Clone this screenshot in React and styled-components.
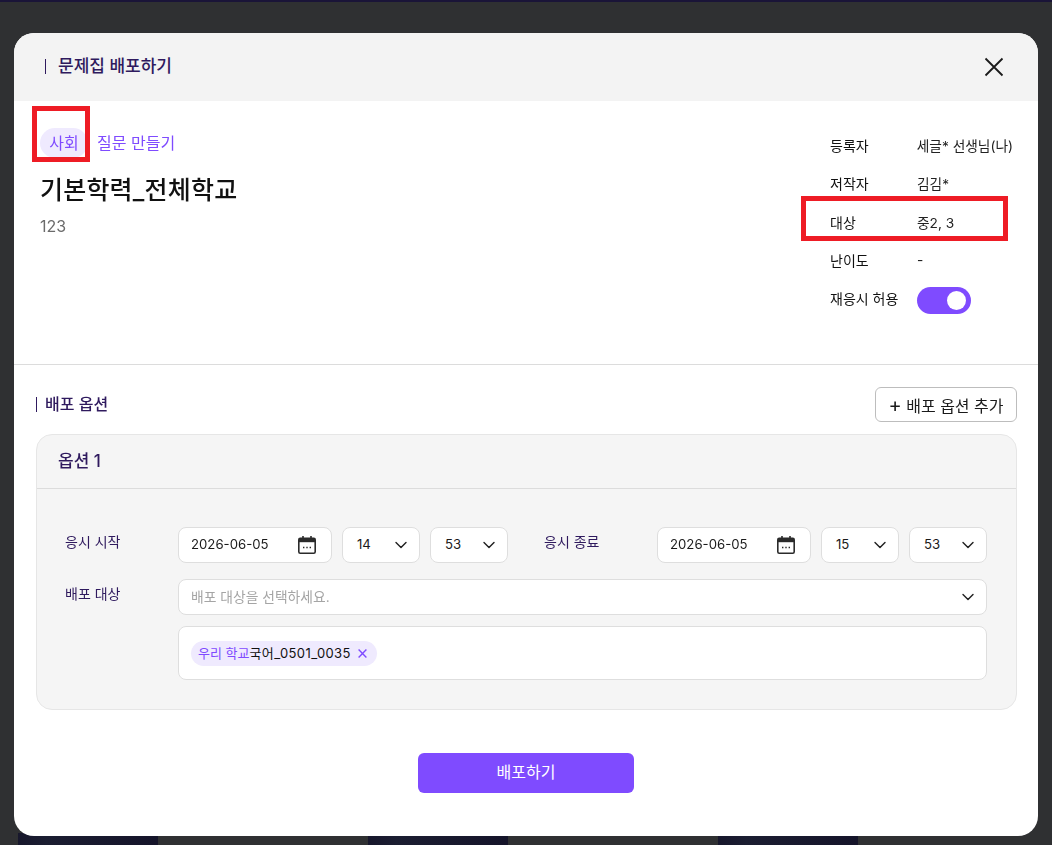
import React from "react";
import styled, { createGlobalStyle } from "styled-components";
import { ChevronDown } from "lucide-react";

const FONT = `Inter, "Noto Sans CJK KR", "Noto Sans", sans-serif`;
const PURPLE = "#7f4bff";
const NAVY = "#2f1a5e";

const GlobalStyle = createGlobalStyle`
  html, body {
    margin: 0;
    height: 100%;
    background: #2f3032;
    font-family: ${FONT};
    overflow: hidden;
  }
  * { box-sizing: border-box; }
`;

const META = [
  ["등록자", "세글* 선생님(나)"],
  ["저작자", "김김*"],
  ["대상", "중2, 3"],
  ["난이도", "-"],
];

const CalendarIcon = () => (
  <svg width="18" height="18" viewBox="0 0 18 18" fill="none">
    <path d="M5 0v3M13 0v3" stroke="#2b2b2b" strokeWidth="1.6" />
    <rect x="0.8" y="2.4" width="16.4" height="14.8" rx="1.4" stroke="#2b2b2b" strokeWidth="1.6" />
    <rect x="1" y="2.6" width="16" height="3.6" fill="#2b2b2b" />
    <path d="M5 11.5h1.4M8.3 11.5h1.4M11.6 11.5H13" stroke="#2b2b2b" strokeWidth="1.4" />
  </svg>
);

const CloseIcon = () => (
  <svg width="20" height="20" viewBox="0 0 20 20" fill="none">
    <path d="M1.5 1.5l17 17M18.5 1.5l-17 17" stroke="#1a1a1a" strokeWidth="1.8" />
  </svg>
);

const RemoveIcon = () => (
  <svg width="9" height="9" viewBox="0 0 9 9" fill="none">
    <path d="M0.6 0.6l7.8 7.8M8.4 0.6l-7.8 7.8" stroke={PURPLE} strokeWidth="1.4" />
  </svg>
);

const DateField = ({ value }) => (
  <DateBox>
    <FieldText>{value}</FieldText>
    <CalendarIcon />
  </DateBox>
);

const TimeField = ({ value }) => (
  <TimeBox>
    <FieldText>{value}</FieldText>
    <ChevronDown size={20} strokeWidth={1.7} color="#222" />
  </TimeBox>
);

const App = () => {
  return (
    <>
      <GlobalStyle />
      <Backdrop>
        <PeekCard />
        <PeekCard />
        <PeekCard />
      </Backdrop>
      <Overlay>
        <Modal>
          <ModalHeader>
            <HeaderTitle>문제집 배포하기</HeaderTitle>
            <CloseButton>
              <CloseIcon />
            </CloseButton>
          </ModalHeader>

          <Summary>
            <SummaryMain>
              <TagRow>
                <SubjectChip>사회</SubjectChip>
                <MakeLink>질문 만들기</MakeLink>
                <Marker $top={-22} $left={-8} $width={58} $height={56} />
              </TagRow>
              <BookTitle>기본학력_전체학교</BookTitle>
              <BookDesc>123</BookDesc>
            </SummaryMain>
            <MetaList>
              {META.map(([label, value]) => (
                <MetaRow key={label}>
                  <MetaLabel>{label}</MetaLabel>
                  <MetaValue>{value}</MetaValue>
                  {label === "대상" && <Marker $top={-8} $left={-29} $width={207} $height={45} />}
                </MetaRow>
              ))}
              <MetaRow>
                <MetaLabel>재응시 허용</MetaLabel>
                <Toggle />
              </MetaRow>
            </MetaList>
          </Summary>

          <OptionSection>
            <SectionHead>
              <SectionTitle>배포 옵션</SectionTitle>
              <AddButton>
                <Plus>+</Plus> 배포 옵션 추가
              </AddButton>
            </SectionHead>

            <OptionCard>
              <OptionHead>옵션 1</OptionHead>
              <OptionBody>
                <Row>
                  <FieldLabel>응시 시작</FieldLabel>
                  <DateField value="2026-06-05" />
                  <TimeField value="14" />
                  <TimeField value="53" />
                  <FieldLabel $indent={26}>응시 종료</FieldLabel>
                  <DateField value="2026-06-05" />
                  <TimeField value="15" />
                  <TimeField value="53" />
                </Row>
                <Row>
                  <FieldLabel>배포 대상</FieldLabel>
                  <TargetCol>
                    <TargetSelect>
                      <Placeholder>배포 대상을 선택하세요.</Placeholder>
                      <ChevronDown size={20} strokeWidth={1.7} color="#222" />
                    </TargetSelect>
                    <TargetBox>
                      <TargetChip>
                        <ChipScope>우리 학교</ChipScope>
                        <ChipName>국어_0501_0035</ChipName>
                        <RemoveIcon />
                      </TargetChip>
                    </TargetBox>
                  </TargetCol>
                </Row>
              </OptionBody>
            </OptionCard>
          </OptionSection>

          <Footer>
            <SubmitButton>배포하기</SubmitButton>
          </Footer>
        </Modal>
      </Overlay>
    </>
  );
};

const Backdrop = styled.div`
  position: fixed;
  inset: 0;
  display: flex;
  align-items: flex-end;
  gap: 210px;
  padding-left: 18px;
  border-top: 2px solid #1a1438;
`;
const PeekCard = styled.div`
  width: 140px;
  height: 12px;
  background: linear-gradient(90deg, #17172c, #1b1d31 20%, #15142a);
`;
const Overlay = styled.div`
  position: fixed;
  inset: 0;
  padding: 33px 14px 9px;
`;
const Modal = styled.div`
  height: 803px;
  background: #fff;
  border-radius: 20px;
  overflow: hidden;
  display: flex;
  flex-direction: column;
`;
const ModalHeader = styled.header`
  height: 68px;
  flex: none;
  background: #f3f3f3;
  display: flex;
  align-items: center;
  justify-content: space-between;
  padding: 0 34px 0 31px;
`;
const HeaderTitle = styled.h2`
  margin: 0 0 1px;
  border-left: 1px solid ${NAVY};
  padding-left: 12px;
  font-size: 17px;
  line-height: 15px;
  font-weight: 500;
  color: ${NAVY};
`;
const CloseButton = styled.button`
  width: 20px;
  height: 20px;
  padding: 0;
  border: none;
  background: none;
  display: flex;
`;
const Summary = styled.section`
  height: 264px;
  flex: none;
  display: flex;
  justify-content: space-between;
  border-bottom: 1px solid #dcdcdc;
  padding: 27px 25px 0 26px;
`;
const SummaryMain = styled.div`
  display: flex;
  flex-direction: column;
`;
const TagRow = styled.div`
  position: relative;
  display: flex;
  align-items: center;
  gap: 9px;
`;
const Marker = styled.div`
  position: absolute;
  top: ${(p) => p.$top}px;
  left: ${(p) => p.$left}px;
  width: ${(p) => p.$width}px;
  height: ${(p) => p.$height}px;
  border: 5px solid #ee1c25;
  pointer-events: none;
`;
const SubjectChip = styled.span`
  height: 30px;
  width: 48px;
  padding-bottom: 2px;
  border-radius: 15px;
  background: #efeafe;
  color: ${PURPLE};
  font-size: 16px;
  display: flex;
  align-items: center;
  justify-content: center;
`;
const MakeLink = styled.a`
  margin-bottom: 2px;
  color: ${PURPLE};
  font-size: 16px;
`;
const BookTitle = styled.h1`
  margin: 14px 0 0;
  font-size: 25px;
  line-height: 36px;
  font-weight: 500;
  letter-spacing: 0.2px;
  color: #111;
`;
const BookDesc = styled.p`
  margin: 7px 0 0;
  font-size: 16px;
  line-height: 22px;
  color: #6b6b6b;
`;
const MetaList = styled.dl`
  margin: -1px 0 0;
  width: 183px;
  display: flex;
  flex-direction: column;
`;
const MetaRow = styled.div`
  position: relative;
  height: 38.25px;
  display: flex;
  align-items: center;
`;
const MetaLabel = styled.dt`
  width: 87px;
  margin-bottom: 2px;
  font-size: 14px;
  color: #111;
`;
const MetaValue = styled.dd`
  margin: 0 0 2px;
  font-size: 13.7px;
  color: #222;
  white-space: nowrap;
`;
const Toggle = styled.div`
  position: relative;
  width: 54px;
  height: 27px;
  margin-top: 2px;
  border-radius: 14px;
  background: ${PURPLE};

  &::after {
    content: "";
    position: absolute;
    top: 4px;
    right: 5px;
    width: 19px;
    height: 19px;
    border-radius: 50%;
    background: #fff;
  }
`;
const OptionSection = styled.section`
  padding: 22px 21px 0 22px;
`;
const SectionHead = styled.div`
  display: flex;
  align-items: center;
  justify-content: space-between;
  height: 35px;
`;
const SectionTitle = styled.h3`
  margin: 0;
  border-left: 1px solid ${NAVY};
  padding-left: 8px;
  font-size: 16px;
  line-height: 15px;
  font-weight: 500;
  color: ${NAVY};
`;
const AddButton = styled.button`
  width: 142px;
  height: 35px;
  border: 1px solid #bdbdbd;
  border-radius: 6px;
  background: #fff;
  font-family: inherit;
  font-size: 16px;
  color: #1a1a1a;
  padding: 0;
`;
const Plus = styled.span`
  font-size: 20px;
  line-height: 1;
`;
const OptionCard = styled.div`
  margin-top: 12px;
  height: 276px;
  background: #f5f5f5;
  border: 1px solid #e6e6e6;
  border-radius: 16px;
`;
const OptionHead = styled.div`
  height: 54px;
  border-bottom: 1px solid #dcdcdc;
  display: flex;
  align-items: center;
  padding: 0 0 5px 21px;
  font-size: 17px;
  font-weight: 500;
  color: ${NAVY};
`;
const OptionBody = styled.div`
  padding: 38px 29px 0 28px;
  display: flex;
  flex-direction: column;
  gap: 16px;
`;
const Row = styled.div`
  display: flex;
  align-items: flex-start;
  gap: 10px;
`;
const FieldLabel = styled.div`
  width: 103px;
  margin-left: ${(p) => p.$indent || 0}px;
  flex: none;
  font-size: 14px;
  line-height: 30px;
  color: ${NAVY};
`;
const FieldText = styled.span`
  margin-bottom: 2px;
`;
const DateBox = styled.div`
  width: 154px;
  height: 36px;
  flex: none;
  background: #fff;
  border: 1px solid #dedede;
  border-radius: 8px;
  display: flex;
  align-items: center;
  justify-content: space-between;
  padding: 0 15px 0 12px;
  font-size: 13.2px;
  color: #1a1a1a;
`;
const TimeBox = styled.div`
  width: 78px;
  height: 36px;
  flex: none;
  background: #fff;
  border: 1px solid #dedede;
  border-radius: 8px;
  display: flex;
  align-items: center;
  justify-content: space-between;
  padding: 0 8px 0 14px;
  font-size: 13.2px;
  color: #1a1a1a;
`;
const TargetCol = styled.div`
  flex: 1;
  display: flex;
  flex-direction: column;
  gap: 11px;
`;
const TargetSelect = styled.div`
  height: 36px;
  background: #fff;
  border: 1px solid #dedede;
  border-radius: 8px;
  display: flex;
  align-items: center;
  justify-content: space-between;
  padding: 0 8px 0 12px;
`;
const Placeholder = styled.span`
  margin-bottom: 2px;
  font-size: 13.8px;
  color: #a5a5a5;
`;
const TargetBox = styled.div`
  height: 54px;
  background: #fff;
  border: 1px solid #dedede;
  border-radius: 8px;
  display: flex;
  align-items: center;
  padding: 0 12px;
`;
const TargetChip = styled.div`
  height: 25px;
  border-radius: 13px;
  background: #efeafe;
  display: flex;
  align-items: center;
  padding: 0 10px 0 7px;
  font-size: 13px;
`;
const ChipScope = styled.span`
  margin-bottom: 2px;
  color: ${PURPLE};
`;
const ChipName = styled.span`
  margin: 0 7px 2px 0;
  letter-spacing: 0.4px;
  color: #111;
`;
const Footer = styled.footer`
  display: flex;
  justify-content: center;
  padding-top: 43px;
`;
const SubmitButton = styled.button`
  width: 216px;
  height: 40px;
  border: none;
  border-radius: 6px;
  padding: 0 0 4px;
  background: ${PURPLE};
  color: #fff;
  font-family: inherit;
  font-size: 16px;
`;

export default App;
